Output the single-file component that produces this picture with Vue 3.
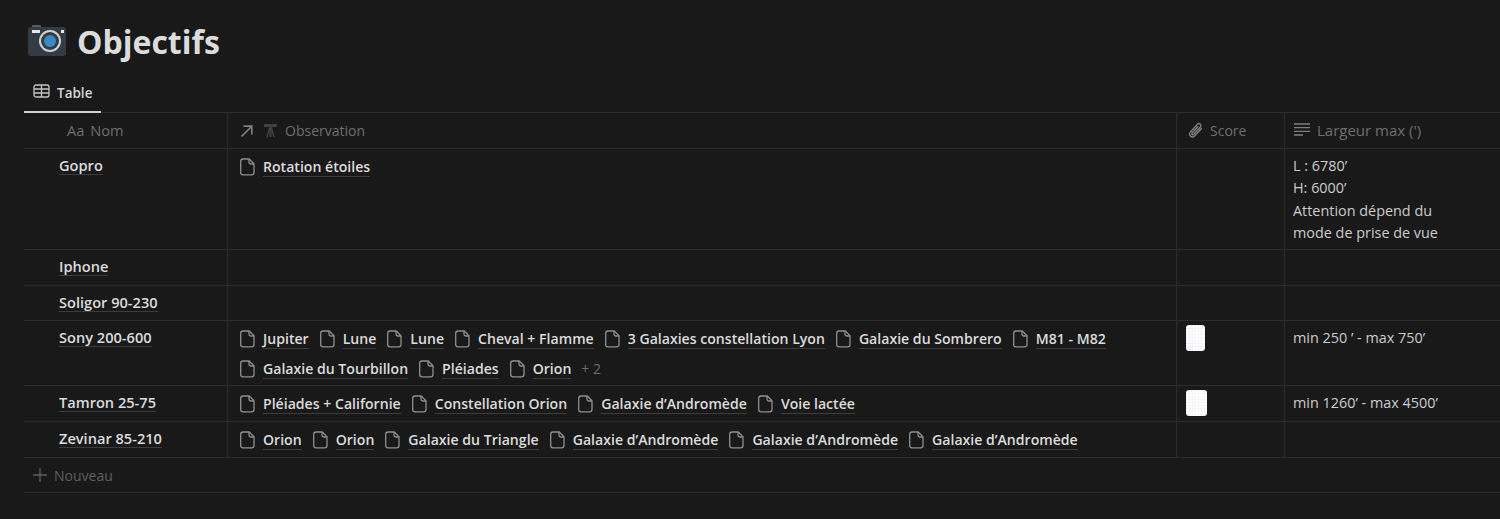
<script setup>
const rows = [
  { name: 'Gopro', cls: 'h-gopro', pages: ['Rotation étoiles'], max: ['L : 6780’', 'H: 6000’', 'Attention dépend du', 'mode de prise de vue'] },
  { name: 'Iphone', cls: 'h-iphone', pages: [], max: [] },
  { name: 'Soligor 90-230', cls: 'h-soligor', pages: [], max: [] },
  {
    name: 'Sony 200-600',
    cls: 'h-sony',
    pages: ['Jupiter', 'Lune', 'Lune', 'Cheval + Flamme', '3 Galaxies constellation Lyon', 'Galaxie du Sombrero', 'M81 - M82', 'Galaxie du Tourbillon', 'Pléiades', 'Orion'],
    more: '+ 2',
    thumb: 'narrow',
    max: ['min 250 ’ - max 750’']
  },
  {
    name: 'Tamron 25-75',
    cls: 'h-tamron',
    pages: ['Pléiades + Californie', 'Constellation Orion', 'Galaxie d’Andromède', 'Voie lactée'],
    thumb: 'wide',
    max: ['min 1260’ - max 4500’']
  },
  {
    name: 'Zevinar 85-210',
    cls: 'h-zevinar',
    pages: ['Orion', 'Orion', 'Galaxie du Triangle', 'Galaxie d’Andromède', 'Galaxie d’Andromède', 'Galaxie d’Andromède'],
    max: []
  }
]
</script>

<template>
  <div class="page">
    <header class="title">
      <svg class="camera" width="40" height="32" viewBox="0 0 40 32">
        <rect x="5" y="0" width="9" height="4" rx="1" fill="#56606a" />
        <rect x="1" y="2" width="38" height="29" rx="3" fill="#333b44" />
        <rect x="5" y="5" width="8" height="3" fill="#e6e7e8" />
        <rect x="34" y="5" width="3" height="3" fill="#e6e7e8" />
        <circle cx="23" cy="16" r="11" fill="#cfd3d6" />
        <circle cx="23" cy="16" r="9" fill="#333b44" />
        <circle cx="23" cy="16" r="6" fill="#3b88c3" />
      </svg>
      <h1>Objectifs</h1>
    </header>

    <nav class="tabs">
      <div class="tab">
        <svg width="17" height="14" viewBox="0 0 17 14" fill="none" stroke="#c4c4c4" stroke-width="1.3">
          <rect x="1" y="1" width="15" height="12" rx="2" />
          <path d="M1 5h15M1 9h15M8.5 1v12" />
        </svg>
        <span>Table</span>
      </div>
    </nav>

    <section class="table">
      <div class="row head">
        <div class="cell name-head"><span class="aa">Aa</span> Nom</div>
        <div class="cell">
          <svg class="ic" width="14" height="14" viewBox="0 0 14 14" fill="none" stroke="#7f7f7f" stroke-width="1.7">
            <path d="M1.5 12.5 11.5 2.5M3.5 2.2h8.3v8.3" />
          </svg>
          <svg class="scope" width="15" height="15" viewBox="0 0 15 15" fill="none" stroke="#444444" stroke-width="1.3">
            <path d="M1 2.5h13" stroke-width="2.8" />
            <path d="M7.5 4v10" stroke-width="2" />
            <path d="M6.5 5l-2.5 9M8.5 5l2.5 9" />
          </svg>
          <span>Observation</span>
        </div>
        <div class="cell">
          <svg class="ic clip" width="17" height="17" viewBox="0 0 16 16" fill="none" stroke="#7f7f7f" stroke-width="1.3" stroke-linecap="round">
            <path d="M13.6 6.2 7.4 12.9c-1.2 1.3-3 1.4-4.1.4S2.2 10.5 3.4 9.1l6.3-6.8c.8-.9 2-.9 2.8-.2s.8 1.9 0 2.8l-6.2 6.7c-.4.4-1 .5-1.4.1s-.4-1-.1-1.4l5.4-5.8" />
          </svg>
          <span>Score</span>
        </div>
        <div class="cell wide-head">
          <svg class="ic" width="16" height="14" viewBox="0 0 16 14" fill="none" stroke="#7f7f7f" stroke-width="1.3">
            <path d="M0 1h16M0 4.7h16M0 8.4h16M0 12h9" />
          </svg>
          <span>Largeur max (')</span>
        </div>
      </div>

      <div v-for="row in rows" :key="row.name" class="row" :class="row.cls">
        <div class="cell name"><span class="ul">{{ row.name }}</span></div>
        <div class="cell pages">
          <span v-for="(p, i) in row.pages" :key="i" class="page-link">
            <svg width="15" height="18" viewBox="0 0 15 18" fill="none" stroke="#8f8f8f" stroke-width="1.3">
              <path d="M3 1h6.2L14 5.8V14.5a2.4 2.4 0 0 1-2.4 2.4H3A2.4 2.4 0 0 1 .7 14.5V3.4A2.4 2.4 0 0 1 3 1Z" />
              <path d="M9 1v3.2c0 1 .7 1.8 1.8 1.8H14" />
            </svg>
            <span class="ul">{{ p }}</span>
          </span>
          <span v-if="row.more" class="more">{{ row.more }}</span>
        </div>
        <div class="cell score">
          <div v-if="row.thumb" class="thumb" :class="row.thumb"></div>
        </div>
        <div class="cell max">
          <div v-for="line in row.max" :key="line">{{ line }}</div>
        </div>
      </div>

      <div class="new">
        <svg width="14" height="14" viewBox="0 0 14 14" fill="none" stroke="#5f5f5f" stroke-width="1.3">
          <path d="M7 0v14M0 7h14" />
        </svg>
        <span>Nouveau</span>
      </div>
    </section>
  </div>
</template>

<style scoped>
.page {
  height: 519px;
  overflow: hidden;
  box-sizing: border-box;
  padding: 24px 0 0 24px;
  background: #191919;
  color: #d4d4d4;
  font-family: "Open Sans", "Noto Sans", sans-serif;
  font-size: 14px;
}

.title {
  height: 36px;
  display: flex;
  align-items: center;
  gap: 10px;
}

.camera {
  margin: -3px 0 0 3px;
  flex: none;
}

.title h1 {
  margin: 0;
  font-size: 32px;
  font-weight: 700;
  line-height: 36px;
  color: #dcdcdc;
}

.tabs {
  margin-top: 15px;
  height: 38px;
  box-sizing: border-box;
  border-bottom: 1px solid #2c2c2c;
  display: flex;
}

.tab {
  width: 77px;
  height: 38px;
  box-sizing: border-box;
  padding: 0 0 5px 9px;
  border-bottom: 2px solid #d0d0d0;
  display: flex;
  align-items: center;
  gap: 7px;
  color: #d4d4d4;
  font-weight: 600;
  font-size: 13.5px;
}

.tab span {
  margin-top: 4px;
}

.row {
  display: grid;
  grid-template-columns: 204px 949px 108px 1fr;
  border-bottom: 1px solid #2c2c2c;
  box-sizing: border-box;
}

.head { height: 36px; }
.h-gopro { height: 101px; }
.h-iphone { height: 36px; }
.h-soligor { height: 35px; }
.h-sony { height: 65px; }
.h-tamron { height: 36px; }
.h-zevinar { height: 36px; }

.cell {
  border-right: 1px solid #2c2c2c;
  padding: 6px 10px 0 12px;
  box-sizing: border-box;
  min-width: 0;
}

.cell:last-child {
  border-right: none;
  padding-left: 8px;
}

.head .cell {
  display: flex;
  align-items: center;
  padding-top: 0;
  gap: 8px;
  color: #6e6e6e;
}

.head .name-head {
  padding-left: 43px;
  gap: 6px;
  font-size: 14.6px;
  padding-bottom: 1px;
}

.head .wide-head {
  padding-left: 9px;
  padding-bottom: 1px;
  gap: 7px;
  font-size: 15px;
}

.scope {
  margin-left: 1px;
  margin-right: -1px;
}

.clip {
  margin-left: -2px;
  margin-right: -2px;
}

.name {
  padding-left: 35px;
  padding-top: 6px;
  font-size: 14.6px;
  font-weight: 600;
  color: #dcdcdc;
}

.ul {
  border-bottom: 1px solid #3c3c3c;
  line-height: 18px;
  display: inline-block;
}

.pages {
  display: flex;
  flex-wrap: wrap;
  align-content: flex-start;
  column-gap: 11px;
  row-gap: 8px;
  padding-top: 7px;
}

.page-link {
  display: inline-flex;
  align-items: center;
  gap: 8px;
  height: 22px;
  font-size: 14.1px;
  font-weight: 600;
  color: #dcdcdc;
}

.more {
  height: 22px;
  line-height: 22px;
  color: #6e6e6e;
  margin-left: -1px;
}

.score {
  padding: 4px 0 0 9px;
}

.thumb {
  height: 26px;
  border-radius: 3px;
  background-color: #fff;
  background-image:
    linear-gradient(to right, rgba(190, 190, 215, 0.12) 1px, transparent 1px),
    linear-gradient(to bottom, rgba(190, 190, 215, 0.12) 1px, transparent 1px);
  background-size: 3px 3px;
}

.thumb.narrow { width: 19px; }
.thumb.wide { width: 21px; }

.max {
  font-size: 14.4px;
  line-height: 22.3px;
  color: #cccccc;
  padding-top: 6px;
}

.new {
  height: 35px;
  box-sizing: border-box;
  border-bottom: 1px solid #2c2c2c;
  display: flex;
  align-items: center;
  gap: 7px;
  padding-left: 9px;
  color: #5f5f5f;
}
</style>

<style>
html, body { background: #191919; }
</style>
